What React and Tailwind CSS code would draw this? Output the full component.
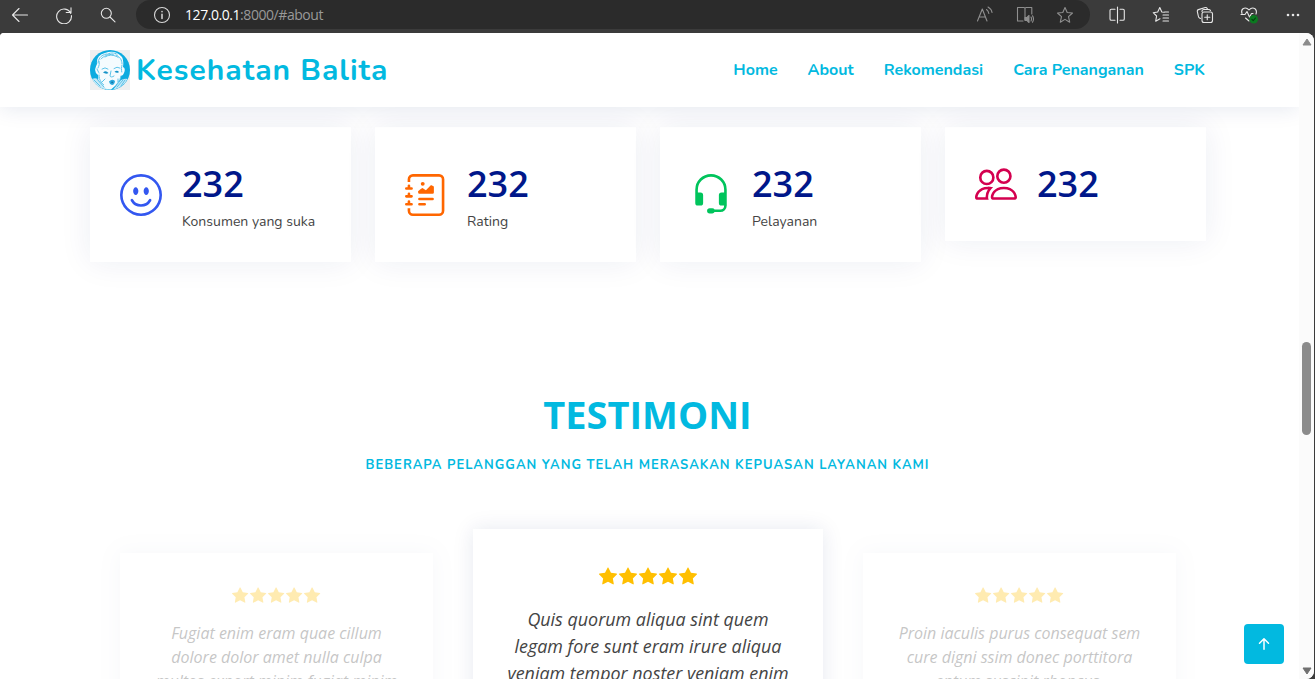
import React from "react";
import { BsEmojiSmile, BsJournalRichtext, BsHeadset, BsPeople, BsStarFill, BsArrowUpShort } from "react-icons/bs";

function Glyph({ children, className = "", size = 18 }) {
  return (
    <svg width={size} height={size} viewBox="0 0 18 18" fill="none" stroke="currentColor" strokeWidth="1.1" strokeLinecap="round" strokeLinejoin="round" className={`shrink-0 ${className}`}>
      {children}
    </svg>
  );
}

const starPath = "M9 1.5l2.2 5 5.3.5-4 3.7 1.2 5.5L9 13.4l-4.700 2.800 1.200-5.500-4-3.700 5.300-.5z";

function BrowserBar() {
  return (
    <div className="flex h-[33px] shrink-0 bg-[#3b3b3b] text-[#e6e6e6]">
      <div className="flex h-[29px] w-[136px] shrink-0 items-center pl-[11px]">
        <Glyph><path d="M1.500 9H16.500M8 2.500L1.500 9L8 15.500" /></Glyph>
        <Glyph className="ml-[26px]"><path d="M15.800 7.400A7.400 7.400 0 1 0 16.400 9.500M16 1.800V6.500H11.200" /></Glyph>
        <Glyph className="ml-[26px]"><circle cx="7.300" cy="7.300" r="5" /><path d="M11 11l5 4.800" /></Glyph>
      </div>
      <div className="flex h-[29px] w-[954px] shrink-0 items-center rounded-r-[15px] rounded-l-[15px] bg-[#2b2b2b] pl-[17px]">
        <Glyph className="text-[#d8d8d8]"><circle cx="9" cy="9" r="7.500" /><path d="M9 8.300V12.500M9 5.500V5.700" strokeWidth="1.500" /></Glyph>
        <span className="ml-[14px] w-[140px] whitespace-nowrap font-['Open_Sans',sans-serif] text-[14px] leading-5 tracking-[-0.44px] text-[#999]">
          <span className="text-white">127.0.0.1</span>:8000/#about
        </span>
        <div className="ml-auto flex items-center gap-[22px] pr-[16px] text-[#8f8f8f]">
          <Glyph><path d="M1.500 15L6.300 3L11 15M3.200 11H9.400M10.500 3.500Q12.500 5 12.800 7.500M12 1Q15.500 3 16 6.500" /></Glyph>
          <Glyph><path d="M9 13.500V2.500Q9 1.500 8 1.500H1.500V15H7M9 2.500Q9 1.500 10 1.500H15.800V8" /><path d="M9 11.500h2l2-2v7l-2-2H9z" fill="currentColor" /><path d="M15 11Q16 13 15 15M16.500 9.800Q18.500 13 16.500 16.200" /></Glyph>
          <Glyph><path d={starPath} /></Glyph>
        </div>
      </div>
      <div className="flex h-[29px] items-center gap-[26px] pl-[18px]">
        <Glyph><path d="M7 3.200H3.300Q2 3.200 2 4.500V13Q2 14.300 3.300 14.300H7M9.500 1V17M12 3.200H15Q16.300 3.200 16.300 4.500V13Q16.300 14.300 15 14.300H12" /></Glyph>
        <Glyph><path d="M12.500 6.300L9.800 6L7.800 1.500L5.700 6L1.200 6.700L4.600 10L3.700 15.200L8 12.800M11 9H16.500M11 12H16.500M11 15H16.500M12.500 6H16.500" /></Glyph>
        <Glyph><path d="M4.500 12.500L3.500 12Q2.500 11.500 2.300 10L1.300 5.300Q1.100 4 2.400 3.600L9.300 1.500Q10.600 1.200 11.200 2.400L11.500 3.500M14.500 4.500Q14 3.500 12.500 3.500H8Q6 3.500 6 5.500" /><rect x="6" y="6" width="10.500" height="10.500" rx="2" /><path d="M11.250 8.700V13.800M8.700 11.250H13.800" /></Glyph>
        <Glyph>
          <path d="M9 15L5.500 12M2 7.500Q.8 4.500 3 2.700Q6 .8 9 3.800Q12 .8 15 2.700Q17.200 4.500 16 8M1 8.500H5L7 5.500L9.500 11L11.500 7.500H13" />
          <circle cx="13.700" cy="13.200" r="4.300" fill="#0b7a20" stroke="none" />
          <path d="M11.900 13.300l1.300 1.300 2.300-2.600" stroke="#063d10" />
        </Glyph>
        <Glyph><g fill="currentColor" stroke="none"><circle cx="4" cy="9" r="1.300" /><circle cx="9" cy="9" r="1.300" /><circle cx="14" cy="9" r="1.300" /></g></Glyph>
      </div>
    </div>
  );
}

function BabyLogo() {
  return (
    <svg width="40" height="40" viewBox="0 0 40 40" className="shrink-0">
      <rect width="40" height="40" fill="#eeeff0" />
      <circle cx="20" cy="20" r="20" fill="#0cabe0" />
      <path d="M7 14Q6 5 15 3Q25 -1 32 7Q34 10 33 17Q36 18 34 23Q33 26 31 26Q30 33 25 36L21 39.500Q13 40 7 34Q9 30 8 25Q4 22 5.500 18Q6 16 7 14Z" fill="#f4fbfe" />
      <path d="M2 29Q6 27 9 30L14 37L18 39.800Q6 38 2 29ZM31 30Q36 28 37.500 29Q33 38 23 39.700Z" fill="#c6e9f7" />
      <g fill="none" stroke="#49bce6" strokeLinecap="round" strokeWidth="0.9">
        <path d="M8 13Q9 5 17 4M11 9Q17 3 24 5M15 7Q22 3 29 8M26 5Q32 8 32 14M18 4Q22 2 27 4" strokeDasharray="2 1" />
        <path d="M8 18Q10 14 9 11M7 19L9 23M32 15Q31 19 32 23M9 25Q9 31 14 35M31 26Q30 31 26 35" strokeDasharray="3 1" />
        <path d="M12 19Q15 16.500 18 19M24 18.500Q27 16 30 18M21 21L20 26Q21 28 24 26M15 29L12 32M28 29L28 32" />
        <path d="M4 30L10 36M7 29L14 37M33 30L27 37M35 30L31 36" />
      </g>
      <path d="M13 22.500Q16 19.800 18.500 23Q16 24.500 13 22.500ZM24.500 21.800Q27 19.500 29 22Q27 23.800 24.500 21.800Z" fill="#1593c8" />
      <path d="M19 31.500Q22 28.500 25 31Q24.500 35 22 35Q19.500 34.500 19 31.500Z" fill="#2caade" />
      <path d="M21 32Q22 31 23.500 32L22 33.500Z" fill="#136f9e" />
    </svg>
  );
}

const stats = [
  { Icon: BsEmojiSmile, color: "text-[#3357f0]", label: "Konsumen yang suka" },
  { Icon: BsJournalRichtext, color: "text-[#ff6600]", label: "Rating" },
  { Icon: BsHeadset, color: "text-[#00c45c]", label: "Pelayanan" },
  { Icon: BsPeople, color: "text-[#d4004f]", label: "" },
];

function Stars({ large }) {
  return (
    <div className={large ? "flex justify-center gap-[2.2px] text-[18px] text-[#ffc107]" : "flex justify-center gap-[1.8px] text-[16.2px] text-[#ffc107]"}>
      {[0, 1, 2, 3, 4].map((i) => <BsStarFill key={i} className="text-[#ffbf00]" />)}
    </div>
  );
}

function SideCard({ lines }) {
  return (
    <article className="mt-[24px] h-[200px] w-[313px] shrink-0 bg-white pt-[34px] text-center opacity-30 shadow-[0_0_20px_rgba(1,41,112,0.1)]">
      <Stars />
      <p className="mt-[18px] whitespace-nowrap font-['Open_Sans',sans-serif] text-[16px] italic leading-6 text-[#444]">
        {lines.map((l) => <span key={l} className="block">{l}</span>)}
      </p>
    </article>
  );
}

export default function App() {
  return (
    <div className="relative flex h-[679px] w-[1315px] flex-col overflow-hidden bg-[#3b3b3b] font-['Nunito',sans-serif]">
      <BrowserBar />
      <div className="flex h-[646px] w-[1314px] overflow-hidden rounded-tl-[4px] rounded-tr-[8px] rounded-br-[8px] bg-white">
        <div className="h-[646px] w-[1299px] shrink-0 overflow-hidden">
          <header className="relative z-10 flex h-[74px] items-center bg-white pl-[90px] pr-[94px] text-[#02b9e0] shadow-[0_2px_20px_rgba(1,41,112,0.1)]">
            <BabyLogo />
            <span className="ml-[6px] mt-[2px] text-[30px] font-bold leading-[30px] tracking-[1px]">Kesehatan Balita</span>
            <nav className="ml-auto flex gap-[30px] text-[16px] font-bold leading-6">
              <a>Home</a><a>About</a><a>Rekomendasi</a><a>Cara Penanganan</a><a>SPK</a>
            </nav>
          </header>
          <main>
            <section className="grid grid-cols-[261px_261px_261px_261px] items-start gap-6 pl-[90px] pt-[20px]">
              {stats.map(({ Icon, color, label }, i) => (
                <div key={i} className="flex items-center bg-white p-[30px] shadow-[0_0_30px_rgba(1,41,112,0.08)]">
                  <Icon className={`mr-[20px] size-[42px] shrink-0 ${color}`} />
                  <div>
                    <span className="block font-['Open_Sans',sans-serif] text-[36px] font-semibold leading-[54px] text-[#00178a]">232</span>
                    {label && <p className="text-[14px] leading-[21px] text-[#444]">{label}</p>}
                  </div>
                </div>
              ))}
            </section>
            <section className="pt-[124px] text-center text-[#02b9e0]">
              <h2 className="pr-[4px] font-['Open_Sans',sans-serif] text-[38px] font-bold leading-[56px]">TESTIMONI</h2>
              <p className="mt-[13px] pr-[4px] text-[13px] font-bold leading-5 tracking-[1px]">BEBERAPA PELANGGAN YANG TELAH MERASAKAN KEPUASAN LAYANAN KAMI</p>
            </section>
            <section className="mt-[54px] flex pl-[120px]">
              <SideCard lines={["Fugiat enim eram quae cillum", "dolore dolor amet nulla culpa", "multos export minim fugiat minim"]} />
              <article className="ml-[40px] mr-[40px] h-[220px] w-[350px] shrink-0 bg-white pt-[38px] text-center shadow-[0_0_20px_rgba(1,41,112,0.1)]">
                <Stars large />
                <p className="mt-[21px] whitespace-nowrap font-['Open_Sans',sans-serif] text-[17.9px] italic leading-[27px] text-[#444]">
                  <span className="block">Quis quorum aliqua sint quem</span>
                  <span className="block">legam fore sunt eram irure aliqua</span>
                  <span className="block">veniam tempor noster veniam enim</span>
                </p>
              </article>
              <SideCard lines={["Proin iaculis purus consequat sem", "cure digni ssim donec porttitora", "entum suscipit rhoncus."]} />
            </section>
          </main>
        </div>
        <div className="flex h-[646px] w-[15px] shrink-0 flex-col items-center bg-[#fbfbfb] pt-[5px]">
          <svg width="10" height="8" viewBox="0 0 10 8" className="shrink-0"><path d="M5 1L9 7H1Z" fill="#8b8b8b" stroke="#8b8b8b" strokeLinejoin="round" /></svg>
          <div className="mt-[296px] h-[93px] w-[9px] shrink-0 rounded-full bg-[#8b8b8b]" />
          <svg width="10" height="8" viewBox="0 0 10 8" className="mb-[4px] mt-auto shrink-0"><path d="M1 1H9L5 7Z" fill="#707070" stroke="#707070" strokeLinejoin="round" /></svg>
        </div>
      </div>
      <button className="absolute left-[1244px] top-[624px] z-20 flex size-[40px] items-center justify-center rounded-[4px] bg-[#02b9e0] text-[24px] text-white">
        <BsArrowUpShort />
      </button>
    </div>
  );
}
